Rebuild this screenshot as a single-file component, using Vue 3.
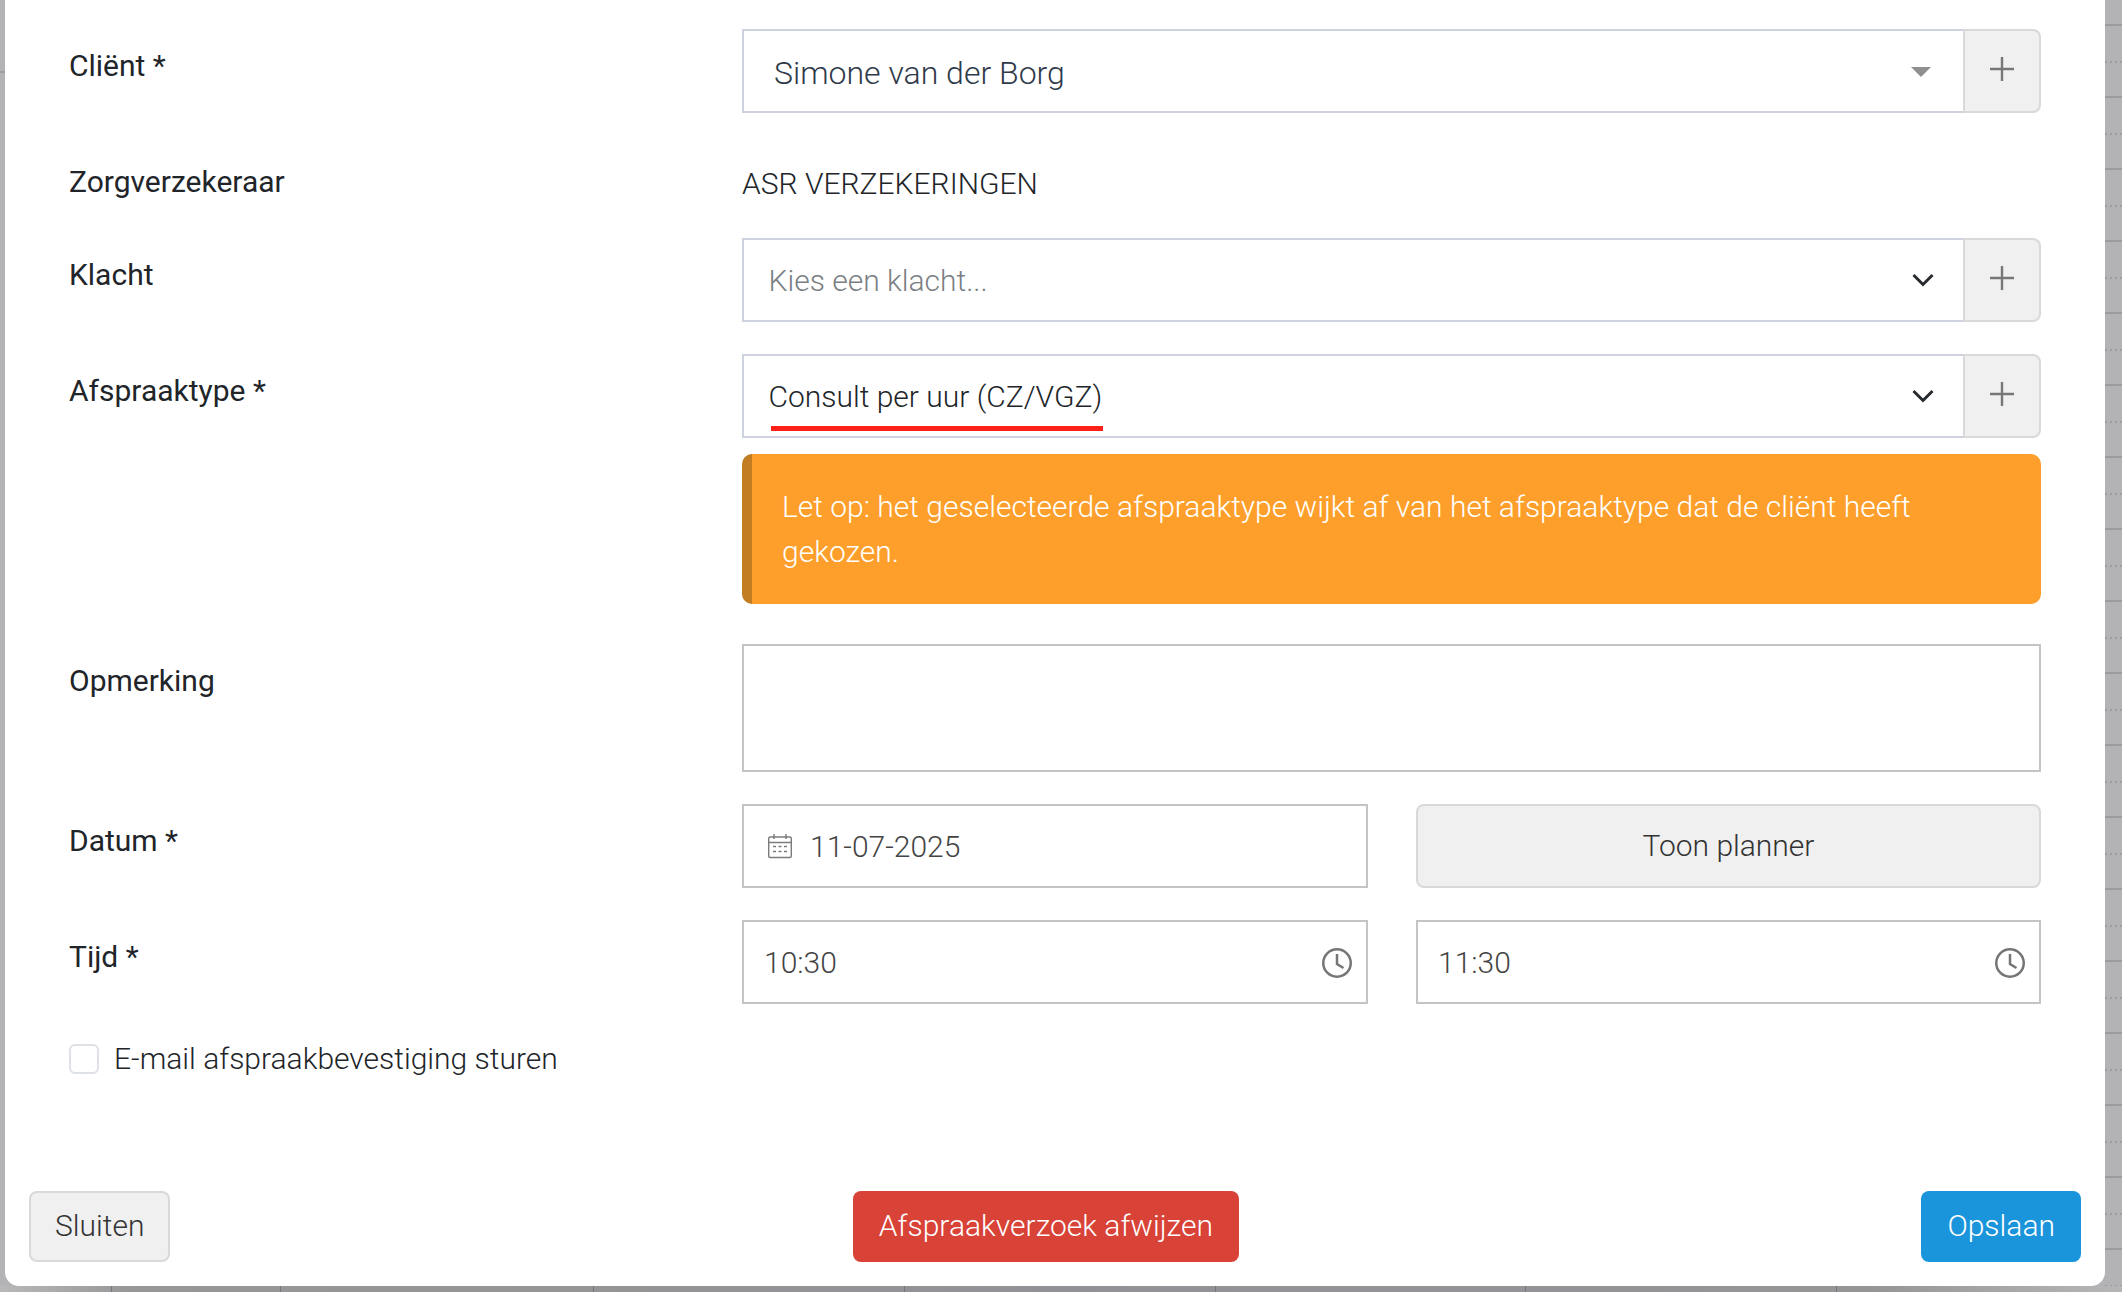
<script setup>
const hLines = Array.from({ length: 18 }, (_, i) => 24 + i * 72)
const dotLines = Array.from({ length: 18 }, (_, i) => 61 + i * 72)
const vLines = [111, 280, 593, 904, 1215, 1525, 1836]
</script>

<template>
  <div class="backdrop">
    <div class="strip-left"><span class="left-line"></span></div>
    <div class="strip-right">
      <span v-for="y in hLines" :key="'h' + y" class="solid" :style="{ top: y + 'px' }"></span>
      <span v-for="y in dotLines" :key="'d' + y" class="dots" :style="{ top: y + 'px' }"></span>
    </div>
    <div class="strip-bottom">
      <span v-for="x in vLines" :key="x" class="vline" :style="{ left: x + 'px' }"></span>
    </div>
    <div class="modal">
      <div class="form">
        <div class="row row-client">
          <label class="lbl">Cliënt *</label>
          <div class="group">
            <div class="control"><span class="client-name">Simone van der Borg</span>
              <svg class="tri" width="20" height="10" viewBox="0 0 20 10"><path d="M0 0H20L10 10Z" fill="#8f8f8f"/></svg>
            </div>
            <div class="addon"><svg width="24" height="24" viewBox="0 0 24 24"><path d="M12 0V24M0 12H24" stroke="#777" stroke-width="2.4" fill="none"/></svg></div>
          </div>
        </div>
        <div class="row row-ins">
          <label class="lbl">Zorgverzekeraar</label>
          <div class="plain">ASR VERZEKERINGEN</div>
        </div>
        <div class="row row-klacht">
          <label class="lbl">Klacht</label>
          <div class="group">
            <div class="control sel"><span class="placeholder">Kies een klacht...</span>
              <svg class="chev" width="22" height="14" viewBox="0 0 22 14"><path d="M1.5 2L11 11.5L20.5 2" stroke="#272b30" stroke-width="3" fill="none"/></svg>
            </div>
            <div class="addon"><svg width="24" height="24" viewBox="0 0 24 24"><path d="M12 0V24M0 12H24" stroke="#777" stroke-width="2.4" fill="none"/></svg></div>
          </div>
        </div>
        <div class="row row-type">
          <label class="lbl">Afspraaktype *</label>
          <div class="col">
            <div class="group">
              <div class="control sel"><span class="value">Consult per uur (CZ/VGZ)</span>
                <svg class="chev" width="22" height="14" viewBox="0 0 22 14"><path d="M1.5 2L11 11.5L20.5 2" stroke="#272b30" stroke-width="3" fill="none"/></svg>
                <span class="redline"></span>
              </div>
              <div class="addon"><svg width="24" height="24" viewBox="0 0 24 24"><path d="M12 0V24M0 12H24" stroke="#777" stroke-width="2.4" fill="none"/></svg></div>
            </div>
            <div class="alert">Let op: het geselecteerde afspraaktype wijkt af van het afspraaktype dat de cliënt heeft gekozen.</div>
          </div>
        </div>
        <div class="row row-note">
          <label class="lbl">Opmerking</label>
          <div class="textarea"></div>
        </div>
        <div class="row row-date">
          <label class="lbl">Datum *</label>
          <div class="pair">
            <div class="field date">
              <svg width="26" height="26" viewBox="0 0 26 26" fill="none" stroke="#7b7b7b" stroke-width="1.4">
                <rect x="1.7" y="4" width="22.6" height="20.5" rx="1.5"/>
                <path d="M1.7 9.5H24.3M7 1V6M19 1V6"/>
                <path d="M6 13.5h3M11.5 13.5h3M17 13.5h3M6 18.5h3M11.5 18.5h3M17 18.5h3" stroke-width="1.6"/>
              </svg>
              <span class="date-text">11-07-2025</span>
            </div>
            <div class="planner"><span class="planner-text">Toon planner</span></div>
          </div>
        </div>
        <div class="row row-time">
          <label class="lbl">Tijd *</label>
          <div class="pair">
            <div class="field time"><span>10:30</span>
              <svg width="32" height="32" viewBox="0 0 32 32" fill="none" stroke="#757575" stroke-width="2.5"><circle cx="16" cy="16" r="13.75"/><path d="M16 7V17L22.5 21"/></svg>
            </div>
            <div class="field time"><span>11:30</span>
              <svg width="32" height="32" viewBox="0 0 32 32" fill="none" stroke="#757575" stroke-width="2.5"><circle cx="16" cy="16" r="13.75"/><path d="M16 7V17L22.5 21"/></svg>
            </div>
          </div>
        </div>
        <div class="check-row">
          <span class="box"></span>
          <span class="check-text">E-mail afspraakbevestiging sturen</span>
        </div>
      </div>
      <div class="footer">
        <button class="btn close">Sluiten</button>
        <button class="btn reject">Afspraakverzoek afwijzen</button>
        <button class="btn save">Opslaan</button>
      </div>
    </div>
  </div>
</template>

<style>
html, body { margin: 0; padding: 0; }
</style>

<style scoped>
.backdrop {
  position: relative;
  width: 2122px;
  height: 1292px;
  overflow: hidden;
  background-color: #b3b3b5;
  font-family: Roboto, "Liberation Sans", sans-serif;
  color: #212529;
  box-sizing: border-box;
  padding: 0 17px 6px 5px;
}
.strip-left { position: absolute; left: 0; top: 0; width: 5px; height: 100%; }
.left-line { position: absolute; left: 0; top: 71px; width: 100%; height: 2px; background: #9c9c9e; }
.strip-right { position: absolute; right: 0; top: 0; width: 17px; height: 100%; }
.solid { position: absolute; left: 0; width: 100%; height: 2px; background: #9c9c9e; }
.dots {
  position: absolute;
  left: 0;
  width: 100%;
  height: 2px;
  background-image: repeating-linear-gradient(to right, #9c9c9e 0, #9c9c9e 2px, transparent 2px, transparent 5px);
}
.strip-bottom {
  position: absolute;
  left: 0;
  bottom: 0;
  width: 100%;
  height: 6px;
  background: linear-gradient(to right, #b9b9bb 0, #979799 6%, #929296 50%, #959598 88%, #b6b6b8 100%);
}
.vline { position: absolute; top: 0; width: 1px; height: 100%; background: #77777b; }
.modal {
  position: relative;
  height: 1286px;
  background: #fff;
  border-radius: 0 0 14px 14px;
  box-sizing: border-box;
  display: flex;
  flex-direction: column;
}
.form { padding: 29px 64px 0 64px; }
.row { display: flex; }
.lbl {
  width: 673px;
  flex: none;
  font-size: 30px;
  line-height: 45px;
  padding-top: 14px;
  color: #212529;
}
.row-ins { height: 84px; }
.row-ins .lbl { padding-top: 5px; }
.plain { font-size: 30px; font-weight: 300; padding-top: 7px; line-height: 45px; }
.row-client { height: 125px; }
.row-klacht { height: 116px; }
.row-type { height: 290px; }
.row-note { height: 160px; }
.row-date { height: 116px; }
.row-time { height: 116px; }
.col { flex: 1; }
.group { display: flex; height: 84px; flex: 1; }
.control {
  flex: 1;
  position: relative;
  border: 2px solid #ced2de;
  border-right: 0;
  box-sizing: border-box;
  display: flex;
  align-items: center;
  padding-left: 30px;
  font-weight: 300;
  font-size: 32px;
}
.client-name { color: #2f3a4a; padding-top: 3px; }
.control.sel { padding-left: 24.5px; font-size: 30px; }
.placeholder { color: #7b7f84; }
.tri { position: absolute; right: 32px; top: 36px; }
.chev { position: absolute; right: 29px; top: 33px; }
.redline {
  position: absolute;
  left: 27px;
  top: 70px;
  width: 332px;
  height: 5px;
  background: #ff2018;
}
.addon {
  width: 78px;
  flex: none;
  box-sizing: border-box;
  background: #f0f0f0;
  border: 2px solid #d9d9d9;
  border-radius: 0 8px 8px 0;
  display: flex;
  align-items: center;
  justify-content: center;
}
.addon svg { margin-bottom: 4px; }
.alert {
  margin-top: 16px;
  height: 150px;
  box-sizing: border-box;
  background: #fd9f2a;
  border-left: 10px solid #c27c22;
  border-radius: 10px;
  color: #fff;
  font-size: 30px;
  font-weight: 300;
  line-height: 45px;
  padding: 30px 90px 0 30px;
}
.textarea {
  flex: 1;
  height: 128px;
  box-sizing: border-box;
  border: 2px solid #c4c4c4;
}
.pair { flex: 1; display: grid; grid-template-columns: 626px 625px; column-gap: 48px; }
.field {
  height: 84px;
  box-sizing: border-box;
  border: 2px solid #c4c4c4;
  display: flex;
  align-items: center;
  font-size: 30px;
  font-weight: 300;
  color: #444;
}
.date { padding-left: 23px; gap: 17px; }
.date-text { padding-top: 1px; }
.time { padding: 0 13px 0 20px; justify-content: space-between; }
.time svg { margin-top: 2px; }
.planner {
  height: 84px;
  box-sizing: border-box;
  border: 2px solid #d9d9d9;
  border-radius: 8px;
  background: #f0f0f0;
  display: flex;
  align-items: center;
  justify-content: center;
  font-size: 30px;
  font-weight: 300;
  color: #333;
}
.planner-text { padding-bottom: 2px; }
.check-row { display: flex; align-items: center; gap: 15px; height: 45px; }
.box {
  width: 30px;
  height: 30px;
  box-sizing: border-box;
  border: 2px solid #dee2e6;
  border-radius: 6px;
}
.check-text { font-size: 30px; font-weight: 300; }
.footer {
  margin-top: auto;
  padding: 0 24px 24px 24px;
  display: flex;
  justify-content: space-between;
}
.btn {
  height: 71px;
  box-sizing: border-box;
  font-family: inherit;
  font-size: 30px;
  font-weight: 300;
  border-radius: 8px;
  border: 0;
  padding: 0 26px 2px;
}
.close { background: #f0f0f0; border: 2px solid #d9d9d9; color: #333; padding: 0 24px 2px; }
.reject { background: #d84237; color: #fff; }
.save { background: #1a94da; color: #fff; padding: 0 26px 2px; }
</style>
